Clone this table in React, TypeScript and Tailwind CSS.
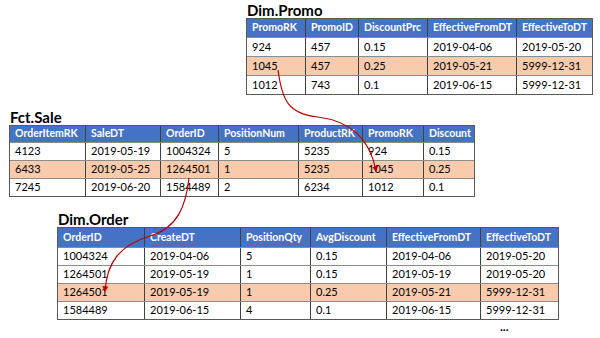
import React from "react";

type Col = { name: string; w: string; squiggle?: boolean };

interface TableSpec {
  title: string;
  wrap: string;
  headH: string;
  rowH: string;
  cols: Col[];
  rows: string[][];
  hl: number;
}

const promo: TableSpec = {
  title: "Dim.Promo",
  wrap: "ml-[246px] mt-[2px]",
  headH: "h-[18px]",
  rowH: "h-[19px]",
  cols: [
    { name: "PromoRK", w: "w-[59px]" },
    { name: "PromoID", w: "w-[53px]" },
    { name: "DiscountPrc", w: "w-[69px]" },
    { name: "EffectiveFromDT", w: "w-[89px]" },
    { name: "EffectiveToDT", w: "w-[75px]" },
  ],
  rows: [
    ["924", "457", "0.15", "2019-04-06", "2019-05-20"],
    ["1045", "457", "0.25", "2019-05-21", "5999-12-31"],
    ["1012", "743", "0.1", "2019-06-15", "5999-12-31"],
  ],
  hl: 1,
};

const sale: TableSpec = {
  title: "Fct.Sale",
  wrap: "ml-[9px] mt-[14px]",
  headH: "h-[16px]",
  rowH: "h-[18px]",
  cols: [
    { name: "OrderItemRK", w: "w-[76px]" },
    { name: "SaleDT", w: "w-[75px]" },
    { name: "OrderID", w: "w-[58px]" },
    { name: "PositionNum", w: "w-[80px]" },
    { name: "ProductRK", w: "w-[64px]" },
    { name: "PromoRK", w: "w-[61px]" },
    { name: "Discount", w: "w-[50px]" },
  ],
  rows: [
    ["4123", "2019-05-19", "1004324", "5", "5235", "924", "0.15"],
    ["6433", "2019-05-25", "1264501", "1", "5235", "1045", "0.25"],
    ["7245", "2019-06-20", "1584489", "2", "6234", "1012", "0.1"],
  ],
  hl: 1,
};

const order: TableSpec = {
  title: "Dim.Order",
  wrap: "ml-[57px] mt-[14px]",
  headH: "h-[19px]",
  rowH: "h-[18px]",
  cols: [
    { name: "OrderID", w: "w-[87px]" },
    { name: "CreateDT", w: "w-[96px]", squiggle: true },
    { name: "PositionQty", w: "w-[70px]", squiggle: true },
    { name: "AvgDiscount", w: "w-[76px]" },
    { name: "EffectiveFromDT", w: "w-[94px]" },
    { name: "EffectiveToDT", w: "w-[77px]" },
  ],
  rows: [
    ["1004324", "2019-04-06", "5", "0.15", "2019-04-06", "2019-05-20"],
    ["1264501", "2019-05-19", "1", "0.15", "2019-05-19", "2019-05-20"],
    ["1264501", "2019-05-19", "1", "0.25", "2019-05-21", "5999-12-31"],
    ["1584489", "2019-06-15", "4", "0.1", "2019-06-15", "5999-12-31"],
  ],
  hl: 2,
};

function DataTable({ t }: { t: TableSpec }) {
  return (
    <div className={t.wrap}>
      <div className="h-[16px] pl-[1px] text-[15px] leading-[16px] font-bold text-black">{t.title}</div>
      <div className="w-fit border border-[#595959]">
        <div className={`flex bg-[#4472C4] ${t.headH}`}>
          {t.cols.map((c, i) => (
            <div
              key={i}
              className={`${c.w} flex items-center pl-[5px] border-r border-[#404040] last:border-r-0 text-[10.5px] font-bold text-white`}
            >
              {c.squiggle ? (
                <span className="underline decoration-wavy decoration-[#e03c3c] decoration-1 underline-offset-[1px]">
                  {c.name}
                </span>
              ) : (
                c.name
              )}
            </div>
          ))}
        </div>
        {t.rows.map((r, ri) => (
          <div
            key={ri}
            className={`flex border-t border-[#8c8c8c] ${t.rowH} ${ri === t.hl ? "bg-[#F8CBAD]" : "bg-white"}`}
          >
            {r.map((v, ci) => (
              <div
                key={ci}
                className={`${t.cols[ci].w} flex items-center pl-[5px] border-r border-[#404040] last:border-r-0 text-[11px] text-black`}
              >
                {v}
              </div>
            ))}
          </div>
        ))}
      </div>
    </div>
  );
}

export default function App() {
  return (
    <div className="relative w-[600px] h-[338px] overflow-hidden bg-white font-['Lato','Liberation_Sans',sans-serif]">
      <DataTable t={promo} />
      <DataTable t={sale} />
      <DataTable t={order} />
      <div className="ml-[500px] mt-[1px] text-[12px] leading-[12px] font-bold text-black">...</div>

      <svg className="absolute inset-0 pointer-events-none" width="600" height="338" viewBox="0 0 600 338">
        <defs>
          <marker id="ah" viewBox="0 0 10 10" refX="8" refY="5" markerWidth="5" markerHeight="5" orient="auto">
            <path d="M0,0 L10,5 L0,10 z" fill="#C00000" />
          </marker>
        </defs>
        <path
          d="M278,70 C282,100 288,114 318,117 C350,121 370,138 376,171"
          fill="none"
          stroke="#C00000"
          strokeWidth="1.2"
          markerEnd="url(#ah)"
        />
        <path
          d="M189,178 C186,205 178,228 150,236 C120,245 107,262 105,291"
          fill="none"
          stroke="#C00000"
          strokeWidth="1.2"
          markerEnd="url(#ah)"
        />
      </svg>
    </div>
  );
}
